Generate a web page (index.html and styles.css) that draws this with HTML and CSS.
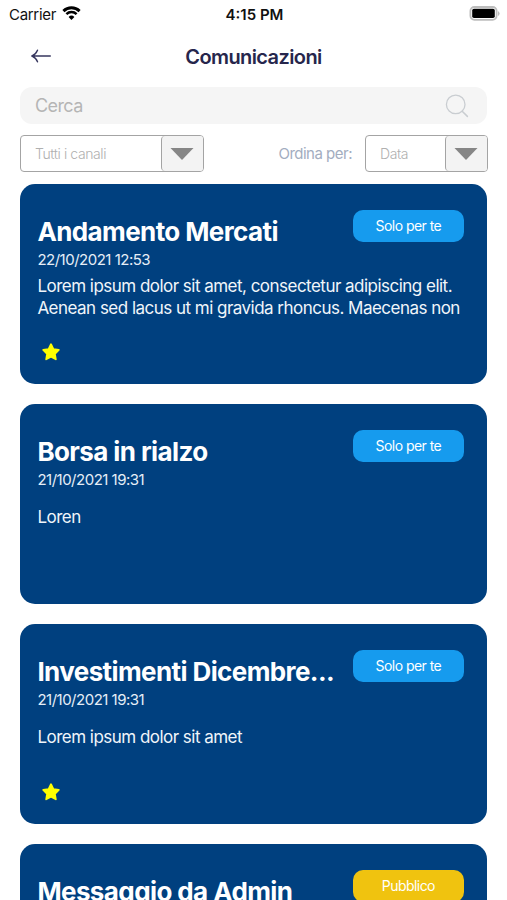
FILE: index.html
```html
<!DOCTYPE html>
<html lang="it">
<head>
  <meta charset="UTF-8">
  <meta name="viewport" content="width=device-width, initial-scale=1.0">
  <title>Comunicazioni</title>
  <link rel="stylesheet" href="styles.css">
</head>
<body>
  <div class="status-bar">
    <div class="carrier">
      <span>Carrier</span>
      <svg class="wifi" width="19" height="14" viewBox="0 0 18 14">
        <path d="M0.9 5.1 A11.6 11.6 0 0 1 17.1 5.1" fill="none" stroke="#000" stroke-width="2.9"/>
        <path d="M3.9 8.2 A7.3 7.3 0 0 1 14.1 8.2" fill="none" stroke="#000" stroke-width="2.5"/>
        <path d="M9 14 L6.1 11 A4.2 4.2 0 0 1 11.9 11 Z" fill="#000"/>
      </svg>
    </div>
    <span class="time">4:15 PM</span>
    <svg class="battery" width="31" height="15" viewBox="0 0 31 15">
      <rect x="1.4" y="1" width="26.2" height="12.8" rx="4" fill="#fff" stroke="#bdbdbd" stroke-width="1.8"/>
      <rect x="3.2" y="2.8" width="22.6" height="9.2" rx="1.8" fill="#000"/>
      <path d="M29 5 Q30.6 6 30.6 7.5 Q30.6 9 29 10 Z" fill="#bdbdbd"/>
    </svg>
  </div>

  <div class="header">
    <svg class="back" width="20" height="14" viewBox="0 0 20 14">
      <path d="M19.3 7 H1 M6.5 1.2 Q4.8 5.4 1 7 Q4.8 8.6 6.5 12.8" fill="none" stroke="#37375f" stroke-width="1.4" stroke-linecap="round"/>
    </svg>
    <h1>Comunicazioni</h1>
  </div>

  <div class="search">
    <span>Cerca</span>
    <svg width="24" height="24" viewBox="0 0 24 24">
      <circle cx="10.7" cy="10.4" r="9.3" fill="none" stroke="#c9cdd1" stroke-width="1.3"/>
      <path d="M17.2 17.2 L22.4 22.4" stroke="#c9cdd1" stroke-width="1.5" stroke-linecap="round"/>
    </svg>
  </div>

  <div class="filters">
    <div class="select channels">
      <span class="value">Tutti i canali</span>
      <span class="arrow"><svg width="24" height="12" viewBox="0 0 24 12"><path d="M0.5 0 H23.5 L12 12 Z" fill="#868686"/></svg></span>
    </div>
    <span class="order-label">Ordina per:</span>
    <div class="select order">
      <span class="value">Data</span>
      <span class="arrow"><svg width="24" height="12" viewBox="0 0 24 12"><path d="M0.5 0 H23.5 L12 12 Z" fill="#868686"/></svg></span>
    </div>
  </div>

  <div class="list">
    <div class="card">
      <div class="card-top">
        <h2>Andamento Mercati</h2>
        <span class="tag">Solo per te</span>
      </div>
      <p class="date">22/10/2021 12:53</p>
      <div class="text"><p>Lorem ipsum dolor sit amet, consectetur adipiscing elit.<br>Aenean sed lacus ut mi gravida rhoncus. Maecenas non</p></div>
      <svg class="star" width="20" height="20" viewBox="0 0 20 20"><path d="M10 2.2 L12.4 7.2 L17.8 7.9 L13.9 11.8 L14.8 17.3 L10 14.8 L5.2 17.3 L6.1 11.8 L2.2 7.9 L7.6 7.2 Z"/></svg>
    </div>

    <div class="card">
      <div class="card-top">
        <h2>Borsa in rialzo</h2>
        <span class="tag">Solo per te</span>
      </div>
      <p class="date">21/10/2021 19:31</p>
      <div class="text"><p>Loren</p></div>
    </div>

    <div class="card">
      <div class="card-top">
        <h2>Investimenti Dicembre...</h2>
        <span class="tag">Solo per te</span>
      </div>
      <p class="date">21/10/2021 19:31</p>
      <div class="text"><p>Lorem ipsum dolor sit amet</p></div>
      <svg class="star" width="20" height="20" viewBox="0 0 20 20"><path d="M10 2.2 L12.4 7.2 L17.8 7.9 L13.9 11.8 L14.8 17.3 L10 14.8 L5.2 17.3 L6.1 11.8 L2.2 7.9 L7.6 7.2 Z"/></svg>
    </div>

    <div class="card">
      <div class="card-top">
        <h2>Messaggio da Admin</h2>
        <span class="tag public">Pubblico</span>
      </div>
    </div>
  </div>
</body>
</html>
```
FILE: styles.css
```css
* {
  box-sizing: border-box;
}

body {
  margin: 0;
  height: 900px;
  overflow: hidden;
  background-color: #fff;
  font-family: Inter, "Liberation Sans", sans-serif;
}

h1, h2, p {
  margin: 0;
}

svg {
  display: block;
  flex: none;
}

.status-bar {
  display: grid;
  grid-template-columns: 1fr auto 1fr;
  align-items: center;
  height: 28px;
  padding: 0 7px 0 9px;
  font-size: 15px;
  color: #111;
}

.carrier {
  display: flex;
  align-items: center;
  gap: 6px;
  letter-spacing: -0.3px;
}

.wifi {
  margin-top: -2px;
}

.time {
  font-weight: 600;
}

.battery {
  justify-self: end;
  margin-top: -2px;
}

.header {
  display: grid;
  grid-template-columns: 1fr auto 1fr;
  align-items: center;
  height: 56px;
  margin-bottom: 3px;
  padding: 0 31px;
}

.header h1 {
  padding-top: 1px;
  font-size: 20px;
  font-weight: 600;
  letter-spacing: -0.6px;
  color: #26264c;
}

.search {
  display: flex;
  justify-content: space-between;
  align-items: center;
  height: 37px;
  margin: 0 20px;
  padding: 0 18px 0 15px;
  border-radius: 12px;
  background-color: #f5f5f5;
  color: #b5b5b5;
  font-size: 18px;
  letter-spacing: -0.6px;
}

.filters {
  display: flex;
  align-items: center;
  height: 37px;
  margin: 11px 19px 0 20px;
}

.select {
  display: flex;
  height: 37px;
  border: 1.5px solid #a4a4a4;
  border-radius: 4px;
  overflow: hidden;
}

.select .value {
  flex: 1;
  padding-left: 14px;
  line-height: 35px;
  font-size: 14px;
  font-weight: 300;
  letter-spacing: -0.4px;
  color: #b0b0b0;
}

.select .arrow {
  display: flex;
  align-items: center;
  justify-content: center;
  width: 42px;
  padding-right: 1px;
  border-left: 1.5px solid #a4a4a4;
  border-radius: 4px 0 0 4px;
  background-color: #f3f3f3;
}

.channels {
  width: 184px;
}

.order {
  width: 123px;
}

.order-label {
  margin-left: auto;
  margin-right: 13px;
  font-size: 15px;
  letter-spacing: -0.5px;
  color: #a3adbf;
}

.list {
  display: flex;
  flex-direction: column;
  gap: 20px;
  margin: 12px 19.6px 0 20.4px;
}

.card {
  display: flex;
  flex-direction: column;
  flex: none;
  height: 200px;
  padding: 26px 23px 0 17px;
  border-radius: 15px;
  background-color: #00407f;
  color: #fff;
}

.card-top {
  display: flex;
  justify-content: space-between;
  height: 40px;
}

.card h2 {
  padding-top: 6px;
  font-size: 26px;
  line-height: 32px;
  font-weight: 700;
  letter-spacing: -0.6px;
  white-space: nowrap;
}

.tag {
  flex: none;
  width: 111px;
  height: 32px;
  padding-right: 1px;
  border-radius: 10px;
  background-color: #169bee;
  font-size: 14px;
  line-height: 32px;
  letter-spacing: -0.55px;
  text-align: center;
}

.public {
  background-color: #f0c30f;
}

.date {
  font-size: 15px;
  line-height: 20px;
  letter-spacing: -0.5px;
  color: #e6eef7;
}

.text {
  display: flex;
  align-items: center;
  height: 54px;
  font-size: 17px;
  line-height: 22px;
  letter-spacing: -0.52px;
  white-space: nowrap;
  color: #f0f5fa;
}

.star {
  margin: 18px 0 0 3.6px;
  fill: #ffff00;
  stroke: #ffff00;
  stroke-width: 1.8;
  stroke-linejoin: round;
}
```
